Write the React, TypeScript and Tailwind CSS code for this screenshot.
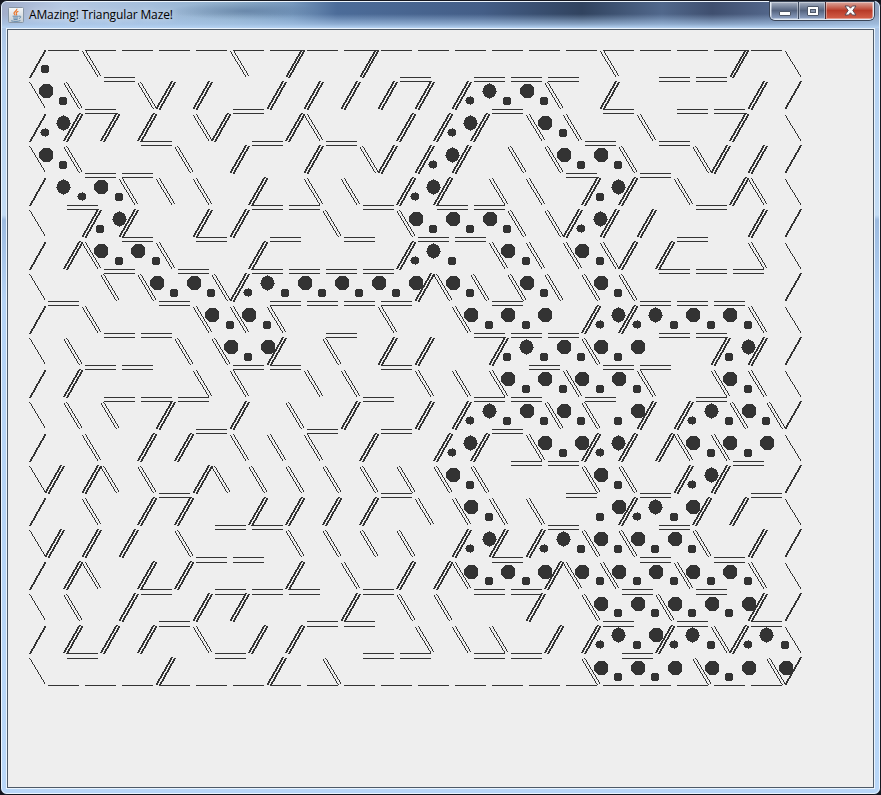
import React from "react";

type Row = { fwd: number[]; back: number[]; dots: string };

const HALF = 18.5;
const X0 = 45;
const Y0 = 47;
const STEP = 32;

// Double horizontal walls below each row, by the lattice index of their left end.
const floors: number[][] = [
  [3, 19, 23, 25, 27, 33, 35],
  [2, 10, 24, 30, 34, 36],
  [5, 11, 15, 29, 33],
  [2, 4, 28, 32],
  [1, 11, 13, 17, 21, 23, 35],
  [4, 8, 12, 16, 20, 22, 34],
  [3, 7, 11, 13, 15, 17, 33, 35, 37],
  [0, 6, 12, 14, 16, 18, 24, 32, 34, 36],
  [3, 5, 15, 23, 25, 27, 33, 35],
  [2, 4, 10, 12, 18, 26, 30, 32],
  [3, 5, 7, 17, 23, 25, 29, 35],
  [8, 14, 18, 24],
  [25, 27, 37],
  [6, 18, 28, 32, 38],
  [9, 11, 27, 33],
  [8, 10, 24, 32, 36],
  [5, 9, 11, 13, 17, 23, 25, 31, 35],
  [6, 14, 16, 30, 34, 38],
  [1, 9, 17, 19, 23, 25, 31],
];

// Slanted walls by the lattice index of their top end, and the dots of the walk.
// O / o: octagon, large and small; R / r: round with nubs, large and small.
const rows: Row[] = [
  { fwd: [14, 18, 38], back: [2, 10, 30], dots: "o0" },
  { fwd: [7, 9, 13, 15, 17, 19, 21, 23, 31, 39], back: [1, 5, 27], dots: "O0 o1 r23 R24 o25 O26 o27" },
  { fwd: [2, 4, 6, 10, 14, 20, 22, 24, 38], back: [8, 14, 26, 28, 32], dots: "r0 R1 r22 R23 O27 o28" },
  { fwd: [11, 15, 19, 21, 23, 37, 39], back: [1, 7, 17, 25, 27, 31, 35], dots: "O0 o1 r21 R22 O28 o29 O30 o31" },
  { fwd: [12, 20, 22, 30, 32, 38], back: [4, 6, 8, 14, 16, 24, 26, 34, 38], dots: "R1 r2 O3 o4 r20 R21 o30 R31" },
  { fwd: [3, 5, 9, 11, 29, 31, 33, 39], back: [15, 19, 25, 27], dots: "o3 R4 O20 o21 O22 o23 O24 o25 r29 R30" },
  { fwd: [2, 12, 20, 32, 34], back: [2, 6, 24, 26, 28, 30, 38], dots: "O3 o4 O5 o6 r20 R21 o22 O25 o26 O29 o30" },
  { fwd: [11, 21], back: [3, 5, 9, 21, 23, 25, 27, 29, 31], dots: "O6 o7 O8 o9 r11 R12 o13 O14 o15 O16 o17 O18 o19 O20 O22 o23 O26 o27 O30 o31" },
  { fwd: [30, 32], back: [2, 8, 10, 12, 18, 22, 38], dots: "O9 o10 O11 o12 O23 o24 O25 o26 O27 r30 R31 r32 R33 o34 O35 o36 O37 o38" },
  { fwd: [13, 19, 21, 25, 37, 39], back: [1, 7, 9, 15, 29], dots: "O10 o11 O12 o25 R26 o27 O28 o29 O30 o31 O32 o37 R38" },
  { fwd: [2], back: [8, 10, 14, 16, 20, 22, 24, 28, 32, 36, 38], dots: "O25 o26 O27 o28 O29 o30 O31 o32 O37 o38" },
  { fwd: [7, 11, 17, 21, 23, 33, 35], back: [1, 3, 13, 27, 29, 37, 39], dots: "r23 R24 o25 O26 o27 O28 o29 o31 O32 r35 R36 o37 O38 o39" },
  { fwd: [6, 8, 18, 22, 24, 30, 32, 34], back: [2, 10, 12, 14, 26, 34, 36], dots: "r22 R23 O27 o28 O29 r30 R31 O35 o36 O37 o38 O39" },
  { fwd: [1, 3, 9, 35, 37], back: [3, 5, 9, 11, 13, 15, 17, 19, 21, 23, 29, 31], dots: "O22 o23 O30 o31 r35 R36" },
  { fwd: [6, 8, 12, 14, 16, 18, 32, 36, 38], back: [2, 20, 22, 24, 26], dots: "O23 o24 o30 O31 r32 R33 o34 O35" },
  { fwd: [1, 3, 5, 23, 25, 27, 39], back: [7, 13, 15, 17, 19, 29, 31, 35], dots: "r23 R24 r27 R28 o29 O30 o31 O32 o33 O34 o35" },
  { fwd: [2, 6, 8, 14, 20, 22, 28], back: [2, 16, 22, 28, 30, 34, 38], dots: "O23 o24 O25 o26 O27 O29 o30 O31 o32 O33 o34 O35 o36 O37 o38" },
  { fwd: [5, 9, 11, 17, 27, 39], back: [1, 19, 21, 29, 33], dots: "O30 o31 O32 o33 O34 o35 O36 o37 O38" },
  { fwd: [2, 4, 6, 12, 14, 28, 30, 34, 38], back: [8, 20, 22, 24, 36], dots: "r30 R31 o32 O33 r34 R35 o36 r38 R39 o40" },
  { fwd: [7, 13], back: [15, 29, 35, 39], dots: "O30 o31 O32 o33 O34 O36 o37 O38 O40" },
];

const run = (x: number, y: number, w: number) => `M${x} ${y}h${w}v1h${-w}z`;

// One stepped line from (x, y), n pixel rows high, w pixels wide on each row.
function slant(x: number, y: number, n: number, dx: number, w: number) {
  let d = "";
  for (let k = 0; k < n; k++) d += run(Math.floor(x + (dx * (k + 0.5)) / n), y + k, w);
  return d;
}

const px = (i: number) => X0 + HALF * i;
const backLeft = (i: number, r: number) => slant(px(i) + 0.2, Y0 + STEP * r + 4, 26, 15.8, 1);
const backRight = (i: number, r: number) => slant(px(i) + 3.2, Y0 + STEP * r + 3, 26, 15.5, 1);
const fwdLeft = (i: number, r: number) => slant(px(i) - 2.7, Y0 + STEP * r + (r ? 2 : 3), r ? 28 : 27, r ? -16 : -15.5, 2);
const fwdRight = (i: number, r: number) => slant(px(i) + 0.1, Y0 + STEP * r + 3, r === 19 ? 27 : 28, r === 19 ? -15 : -15.7, 2);

function wallPath() {
  let d = "";
  for (let j = 0; j < 20; j++) {
    const x = Math.floor(px(2 * j)) + 3;
    d += run(x, 50, 31) + run(x, 685, 31);
  }
  floors.forEach((list, k) =>
    list.forEach((i) => {
      const x = Math.ceil(px(i)) + 3;
      const y = 77 + STEP * k;
      d += run(x, y, 31) + run(x, y + (k >= 15 ? 5 : 4), 31);
    })
  );
  rows.forEach(({ fwd, back }, r) => {
    fwd.forEach((i) => (d += fwdLeft(i, r) + fwdRight(i, r)));
    back.forEach((i) => (d += backLeft(i, r) + backRight(i, r)));
    if (r % 2 === 0) d += fwdRight(0, r) + backLeft(40, r);
    else d += backRight(-1, r) + fwdLeft(41, r);
  });
  return d;
}

function dotPath() {
  let d = "";
  rows.forEach(({ dots }, r) =>
    dots.split(" ").forEach((t) => {
      const kind = t[0];
      const x = px(Number(t.slice(1)));
      const yb = 91 + STEP * (r - 1) + (r === 16 || r === 17 || r === 19 ? 1 : 0);
      const ys = 101 + STEP * (r - 1);
      if (kind === "O") {
        const l = Math.ceil(x + 0.5) - 7;
        d += `M${l + 4} ${yb - 7}h6l4 4v6l-4 4h-6l-4 -4v-6z`;
      } else if (kind === "o") {
        const l = Math.floor(x) - 4;
        d += `M${l + 1} ${ys - 4}h6v1h1v6h-1v1h-6v-1h-1v-6h1z`;
      } else if (kind === "R") {
        const l = Math.floor(x) - 6;
        const t0 = yb - 7;
        d += `M${l + 4} ${t0}h5v1h2v1h1v2h1v6h-1v2h-1v1h-2v1h-5v-1h-2v-1h-1v-2h-1v-6h1v-2h1v-1h2z`;
        d += `M${l + 6} ${t0 - 1}h1v16h-1zM${l - 1} ${t0 + 7}h15v1h-15z`;
      } else {
        const l = Math.floor(x) - 4;
        const t0 = ys - 5;
        d += `M${l + 1} ${t0 + 1}h6v1h1v5h-1v1h-6v-1h-1v-5h1z`;
        d += `M${l + 4} ${t0}h1v9h-1zM${l - 1} ${t0 + 4}h9v1h-9z`;
      }
    })
  );
  return d;
}

function JavaIcon() {
  return (
    <svg width="16" height="16" viewBox="0 0 16 16" className="shrink-0">
      <defs>
        <linearGradient id="cup" x1="0" y1="0" x2="0" y2="1">
          <stop offset="0" stopColor="#f7f9fa" />
          <stop offset="1" stopColor="#c4ccd2" />
        </linearGradient>
      </defs>
      <rect x="0.5" y="0.5" width="15" height="15" rx="1" fill="url(#cup)" stroke="#8796a6" />
      <path d="M8.8 1.8C9.6 3.6 5.6 4.6 6 6.4C6.2 7.2 7 7.6 7.2 8.4M10.4 4.2C8.8 4.8 7.8 5.6 8.4 6.6C8.9 7.3 8.7 7.9 8.1 8.4" fill="none" stroke="#e8762c" strokeWidth="1.2" />
      <path d="M4.6 9.2H10.8M5.2 11H10.2M5.6 12.4H9.6M3.2 13.8C6 14.6 10 14.6 12.4 13.6M11 9.2C13.6 8.6 13.2 11 11 11.4" fill="none" stroke="#5f87ab" strokeWidth="1" />
    </svg>
  );
}

function CaptionButtons() {
  return (
    <div className="mr-[5px] flex h-[18px] overflow-hidden rounded-b-[5px] border border-t-0 border-[#e3ebf5] shadow-[0_0_0_1px_#3a4557]">
      <div className="flex w-[28px] items-end justify-center border-r border-[#3d495e] bg-linear-to-b from-[#a9b3c4] from-0% via-[#56647f] via-50% to-[#8fa3c6] pb-[3px] shadow-[inset_0_0_0_1px_#ffffff60]">
        <div className="h-[5px] w-[12px] rounded-[1px] border border-[#4e586a] bg-white" />
      </div>
      <div className="flex w-[27px] items-center justify-center border-r border-[#4a2a30] bg-linear-to-b from-[#a9b3c4] from-0% via-[#56647f] via-50% to-[#8fa3c6] pl-px shadow-[inset_0_0_0_1px_#ffffff60]">
        <div className="flex h-[10px] w-[12px] items-center justify-center rounded-[1px] border border-[#4e586a] bg-white">
          <div className="h-[4px] w-[6px] border border-[#4e586a] bg-[#8895ad]" />
        </div>
      </div>
      <div className="flex w-[47px] items-center justify-center bg-linear-to-b from-[#dba79e] from-0% via-[#b83a28] via-50% to-[#d4604a] pl-px shadow-[inset_0_0_0_1px_#ffffff60]">
        <svg width="13" height="11" viewBox="0 0 13 11">
          <path d="M1 1H4.6L6.5 3.2L8.4 1H12L8.8 5.5L12 10H8.4L6.5 7.8L4.6 10H1L4.2 5.5Z" fill="#fff" stroke="#5a4a55" strokeWidth="1" />
        </svg>
      </div>
    </div>
  );
}

export default function App() {
  return (
    <div className="h-[795px] w-[881px] bg-[#14161f]">
      <div className="flex h-[795px] w-[881px] flex-col overflow-hidden rounded-[7px] border border-[#15171f] bg-[#b5d2f4] bg-[linear-gradient(180deg,#a8bddb_0px,#b4d2f3_70px,#c4dcf4_214px,#9dbbe0_219px,#b5d3f5_300px,#b9d7f8_100%)]">
        <div className="flex h-[793px] flex-col rounded-[6px] border border-[#edf5fd] px-[4px] pb-[4px]">
          <header className="-mx-[4px] flex h-[26px] items-start rounded-t-[5px] bg-[linear-gradient(180deg,transparent_0px,transparent_12px,#a9c8eaB0_22px,#b5d2f2_26px),radial-gradient(ellipse_75px_9px_at_243px_9px,#4b688f80,transparent),linear-gradient(90deg,#a2aecb_0px,#b6c9e3_60px,#a3bddb_150px,#8faeca_230px,#7698bd_290px,#4c6c99_335px,#445e87_480px,#31435f_580px,#51688c_660px,#3f4f6f_710px,#53678b_770px,#8ca0bd_877px)]">
            <div className="flex flex-1 items-center gap-[5px] pt-[5px] pl-[6px]">
              <JavaIcon />
              <span className="font-['Open_Sans','Noto_Sans',sans-serif] text-[12px] leading-[16px] tracking-[-0.13px] whitespace-nowrap text-black [text-shadow:0_0_7px_#ffffffd0]">
                AMazing! Triangular Maze!
              </span>
            </div>
            <CaptionButtons />
          </header>
          <div className="flex-1 border border-[#eaf3fc]">
            <main className="h-full overflow-hidden border border-[#4d5967] bg-[#eeeeee]">
              <svg width="865" height="757" viewBox="8 30 865 757" shapeRendering="crispEdges" fill="#333333">
                <path d={wallPath()} />
                <path d={dotPath()} />
              </svg>
            </main>
          </div>
        </div>
      </div>
    </div>
  );
}
